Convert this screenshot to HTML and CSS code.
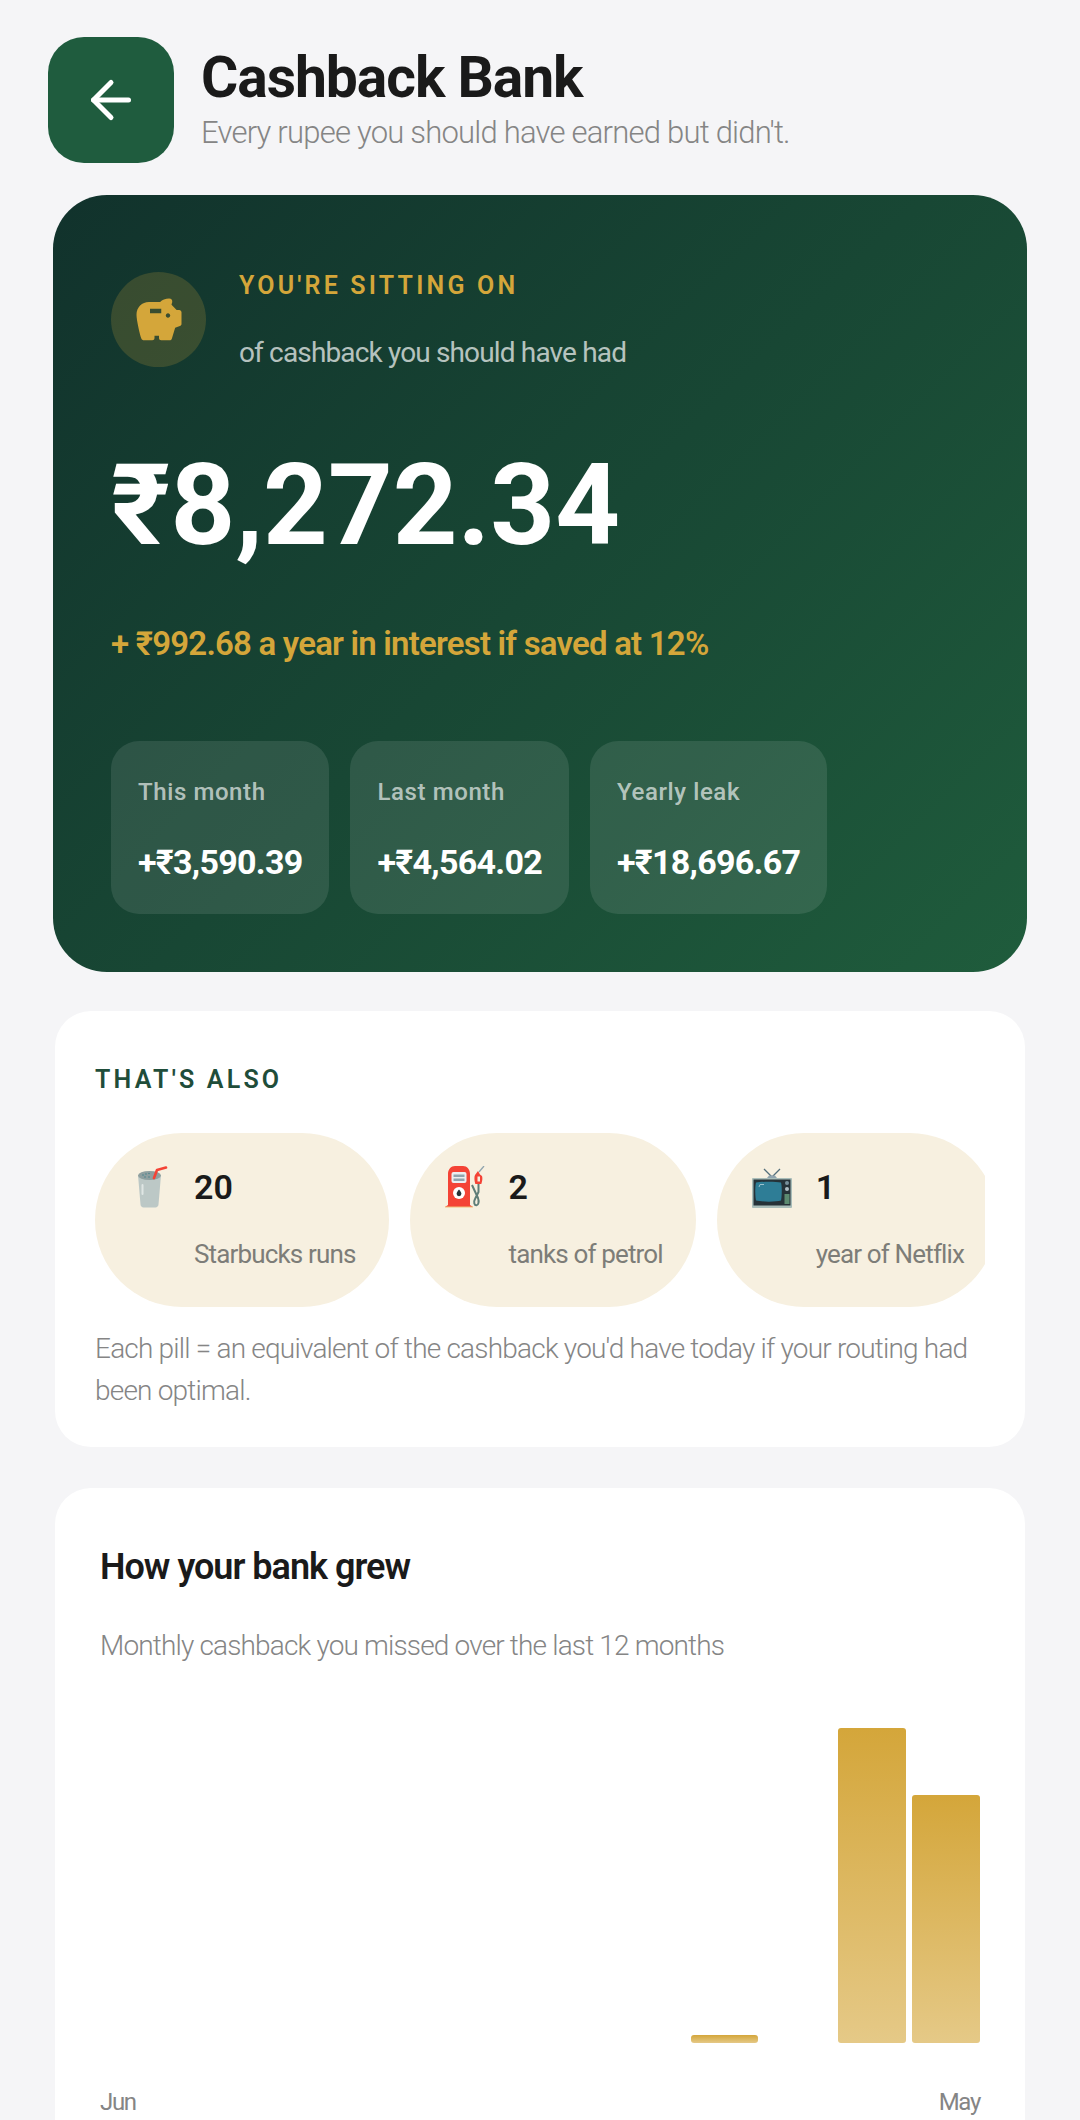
FILE: index.html
```html
<!DOCTYPE html>
<html lang="en">
<head>
    <meta charset="UTF-8">
    <meta name="viewport" content="width=device-width, initial-scale=1.0">
    <title>Cashback Bank</title>
    <link rel="stylesheet" href="styles.css">
</head>
<body>
    <div class="page">
        <header class="top-bar">
            <button class="back-button" aria-label="Back">
                <svg width="60" height="60" viewBox="0 0 24 24" fill="none" stroke="#fff" stroke-width="2" stroke-linecap="round" stroke-linejoin="round">
                    <path d="M19 12H5"/>
                    <path d="m12 19-7-7 7-7"/>
                </svg>
            </button>
            <div class="top-text">
                <h1>Cashback Bank</h1>
                <p>Every rupee you should have earned but didn't.</p>
            </div>
        </header>

        <section class="hero">
            <div class="hero-head">
                <div class="hero-icon">
                    <svg width="54" height="54" viewBox="0 0 24 24" fill="#d4a63a">
                        <path d="M19.83 7.5l-2.27-2.27c.07-.42.18-.81.32-1.15A1.5 1.5 0 0 0 16.5 2.4c-1.64 0-3.09.6-4 1.6h-5C4.46 4 2 6.46 2 9.5c0 2.5 1.4 8.6 2.1 10.6.2.6.7.9 1.2.9H9c.6 0 1-.4 1-1v-1h2v1c0 .6.4 1 1 1h3.7c.5 0 .8-.3 1-.7l1.48-4.89 2.1-.7c.4-.14.72-.5.72-.95V8.5c0-.55-.45-1-1-1h-1.17zM13 9H8V7h5v2zm3 2c-.55 0-1-.45-1-1s.45-1 1-1 1 .45 1 1-.45 1-1 1z"/>
                    </svg>
                </div>
                <div class="hero-head-text">
                    <div class="hero-eyebrow">YOU'RE SITTING ON</div>
                    <div class="hero-note">of cashback you should have had</div>
                </div>
            </div>
            <div class="hero-amount">₹8,272.34</div>
            <div class="hero-interest">+ ₹992.68 a year in interest if saved at 12%</div>
            <div class="stats">
                <div class="stat">
                    <div class="stat-label">This month</div>
                    <div class="stat-value">+₹3,590.39</div>
                </div>
                <div class="stat">
                    <div class="stat-label">Last month</div>
                    <div class="stat-value">+₹4,564.02</div>
                </div>
                <div class="stat">
                    <div class="stat-label">Yearly leak</div>
                    <div class="stat-value">+₹18,696.67</div>
                </div>
            </div>
        </section>

        <section class="card also-card">
            <div class="also-title">THAT'S ALSO</div>
            <div class="pills">
                <div class="pill">
                    <svg class="pill-icon" width="40" height="42" viewBox="0 0 40 42">
                        <path d="M8 9h23l-2.500 29.500c-.1 1.600-1.400 3-3 3h-12c-1.600 0-2.900-1.400-3-3z" fill="#bcc8c6"/>
                        <ellipse cx="19.500" cy="9.500" rx="11.500" ry="4.500" fill="#8f9f9f"/>
                        <g fill="#3f7f8c">
                            <circle cx="13" cy="9" r=".7"/>
                            <circle cx="16" cy="8" r=".7"/>
                            <circle cx="19" cy="7.500" r=".7"/>
                            <circle cx="15" cy="11" r=".7"/>
                            <circle cx="19" cy="11" r=".7"/>
                        </g>
                        <rect x="11.500" y="18" width="2" height="11" rx="1" fill="#dfe6e4"/>
                        <path d="M24 12l3-8 9-2.500" fill="none" stroke="#f44336" stroke-width="2.600" stroke-linecap="round" stroke-linejoin="round"/>
                    </svg>
                    <div class="pill-text">
                        <div class="pill-num">20</div>
                        <div class="pill-label">Starbucks runs</div>
                    </div>
                </div>
                <div class="pill">
                    <svg class="pill-icon" width="40" height="42" viewBox="0 0 40 42">
                        <path d="M3 8c0-4.500 3-8 7-8h8c4 0 7 3.500 7 8v31l3 2H0l3-2z" fill="#f44336"/>
                        <rect x="0" y="40.500" width="28" height="1" fill="#f2bd78"/>
                        <rect x="6.500" y="6" width="15" height="11" rx="2" fill="#eceff1"/>
                        <rect x="8.500" y="8.500" width="11" height="2.500" fill="#90a4ae"/>
                        <rect x="8.500" y="12.500" width="11" height="2.500" fill="#90a4ae"/>
                        <circle cx="14" cy="27" r="6" fill="#fff"/>
                        <path d="M14 23.500c1.600 2 2.400 3.200 2.400 4.300a2.400 2.400 0 0 1-4.800 0c0-1.100.8-2.300 2.400-4.300z" fill="#263238"/>
                        <path d="M27 19l6 13c1.300 3.500.5 7-1.500 7.300s-3.300-3-1.500-6.300l3.500-7V18" fill="none" stroke="#5f7d78" stroke-width="2"/>
                        <path d="M33 5l-3 4c-1 2-.6 6 .3 9h6c1-3 1.500-6 .7-8l-2-1.500z" fill="#f44336"/>
                        <rect x="32.500" y="10.500" width="2.500" height="5" fill="#f5f0e0"/>
                        <path d="M34 6l5-6" stroke="#90a4ae" stroke-width="1.300"/>
                    </svg>
                    <div class="pill-text">
                        <div class="pill-num">2</div>
                        <div class="pill-label">tanks of petrol</div>
                    </div>
                </div>
                <div class="pill">
                    <svg class="pill-icon" width="40" height="42" viewBox="0 0 40 42">
                        <path d="M20 11L12 3M20 11l8-8" stroke="#546e7a" stroke-width="1.300" fill="none"/>
                        <path d="M15 12l2-2.500h6l2 2.500z" fill="#90a4ae"/>
                        <rect x="0" y="12" width="40" height="30" rx="1" fill="#a9bdb9"/>
                        <rect x="1.500" y="13.500" width="37" height="26" fill="#263238"/>
                        <path d="M4 16.500c6-1 20-1 25 0 1 3.500 1 13 0 18-5 1.500-19 1.500-25 0-1-5-1-14.500 0-18z" fill="#2e7d96"/>
                        <path d="M7 21l1-2.500h4" stroke="#9fc3ce" stroke-width="1" fill="none"/>
                        <circle cx="35" cy="17" r="2" fill="#78909c"/>
                        <circle cx="35" cy="23" r="2" fill="#b0bec5"/>
                        <rect x="32.500" y="28" width="5" height="10" fill="#5c8a70"/>
                    </svg>
                    <div class="pill-text">
                        <div class="pill-num">1</div>
                        <div class="pill-label">year of Netflix</div>
                    </div>
                </div>
            </div>
            <p class="also-note">Each pill = an equivalent of the cashback you'd have today if your routing had been optimal.</p>
        </section>

        <section class="card grew-card">
            <h2>How your bank grew</h2>
            <p class="grew-sub">Monthly cashback you missed over the last 12 months</p>
            <div class="chart">
                <div class="bar" style="height:0"></div>
                <div class="bar" style="height:0"></div>
                <div class="bar" style="height:0"></div>
                <div class="bar" style="height:0"></div>
                <div class="bar" style="height:0"></div>
                <div class="bar" style="height:0"></div>
                <div class="bar" style="height:0"></div>
                <div class="bar" style="height:0"></div>
                <div class="bar" style="height:8px"></div>
                <div class="bar" style="height:0"></div>
                <div class="bar" style="height:315px"></div>
                <div class="bar" style="height:248px"></div>
            </div>
            <div class="chart-labels">
                <span>Jun</span>
                <span>May</span>
            </div>
        </section>
    </div>
</body>
</html>
```

FILE: styles.css
```css
* {
    box-sizing: border-box;
}
html, body {
    margin: 0;
    height: 100%;
}
body {
    font-family: Roboto, "Liberation Sans", sans-serif;
    background-color: #f5f5f7;
    color: #1a1a1a;
}
.page {
    height: 100vh;
    overflow: hidden;
}
.top-bar {
    display: flex;
    align-items: center;
    gap: 27px;
    padding: 37px 48px 0;
}
.back-button {
    width: 126px;
    height: 126px;
    flex: none;
    display: flex;
    align-items: center;
    justify-content: center;
    padding: 0;
    border: none;
    border-radius: 36px;
    background-color: #1f5c3e;
}
.top-text h1 {
    margin: 0;
    font-size: 57px;
    font-weight: 700;
    line-height: 62px;
    letter-spacing: -1.05px;
}
.top-text p {
    margin: 4px 0 0;
    font-size: 31px;
    font-weight: 300;
    line-height: 40px;
    letter-spacing: -0.78px;
    color: #858585;
}
.hero {
    margin: 32px 53px 0;
    height: 777px;
    padding: 77px 58px 0;
    border-radius: 54px;
    background: linear-gradient(135deg, #11322c 0%, #1f5c3c 100%);
}
.hero-head {
    display: flex;
    gap: 33px;
}
.hero-icon {
    width: 95px;
    height: 95px;
    flex: none;
    display: flex;
    align-items: center;
    justify-content: center;
    border-radius: 50%;
    background-color: rgba(212, 166, 58, 0.2);
}
.hero-eyebrow {
    font-size: 25px;
    font-weight: 600;
    line-height: 28px;
    letter-spacing: 3.2px;
    color: #d4a63a;
}
.hero-note {
    margin-top: 36px;
    font-size: 28px;
    line-height: 33px;
    letter-spacing: -0.85px;
    color: rgba(255, 255, 255, 0.7);
}
.hero-amount {
    margin-top: 71px;
    font-size: 113px;
    font-weight: 700;
    line-height: 132px;
    color: #fff;
}
.hero-interest {
    margin-top: 52px;
    font-size: 33px;
    font-weight: 600;
    line-height: 40px;
    letter-spacing: -0.8px;
    color: #d4a63a;
}
.stats {
    display: flex;
    gap: 21px;
    margin-top: 77px;
}
.stat {
    height: 173px;
    padding: 37px 27px 0;
    border-radius: 28px;
    background-color: rgba(255, 255, 255, 0.1);
}
.stat-label {
    font-size: 24px;
    font-weight: 500;
    line-height: 28px;
    letter-spacing: 0.6px;
    color: rgba(255, 255, 255, 0.65);
}
.stat-value {
    margin-top: 36px;
    font-size: 34px;
    font-weight: 700;
    line-height: 40px;
    letter-spacing: -0.72px;
    color: #fff;
}
.card {
    margin: 0 55px;
    border-radius: 36px;
    background-color: #fff;
}
.also-card {
    margin-top: 39px;
    height: 436px;
    padding: 55px 40px 0;
}
.also-title {
    font-size: 25px;
    font-weight: 600;
    line-height: 28px;
    letter-spacing: 3.2px;
    color: #1f4d3a;
}
.pills {
    display: flex;
    gap: 21px;
    margin-top: 39px;
    overflow: hidden;
}
.pill {
    height: 174px;
    flex: none;
    display: flex;
    align-items: flex-start;
    gap: 24px;
    padding: 33px 33px 0 35px;
    border-radius: 87px;
    background-color: #f7f0e0;
}
.pill-num {
    font-size: 34px;
    font-weight: 600;
    line-height: 42px;
}
.pill-label {
    margin-top: 30px;
    font-size: 26px;
    line-height: 32px;
    letter-spacing: -0.85px;
    color: #7d7d78;
}
.also-note {
    margin: 21px 0 0;
    font-size: 28px;
    font-weight: 300;
    line-height: 42px;
    letter-spacing: -0.8px;
    color: #858585;
}
.grew-card {
    margin-top: 41px;
    height: 800px;
    padding: 58px 45px 0;
}
.grew-card h2 {
    margin: 0;
    font-size: 36px;
    font-weight: 600;
    line-height: 42px;
    letter-spacing: -1px;
}
.grew-sub {
    margin: 41px 0 0;
    font-size: 28px;
    font-weight: 300;
    line-height: 34px;
    letter-spacing: -0.84px;
    color: #858585;
}
.chart {
    display: flex;
    align-items: flex-end;
    gap: 6px;
    height: 340px;
    margin-top: 40px;
}
.bar {
    flex: 1;
    border-radius: 3px;
    background: linear-gradient(180deg, #d4a63a 0%, #e5c987 100%);
}
.chart-labels {
    display: flex;
    justify-content: space-between;
    margin-top: 45px;
    font-size: 24px;
    line-height: 28px;
    letter-spacing: -1.3px;
    color: #858585;
}
```
